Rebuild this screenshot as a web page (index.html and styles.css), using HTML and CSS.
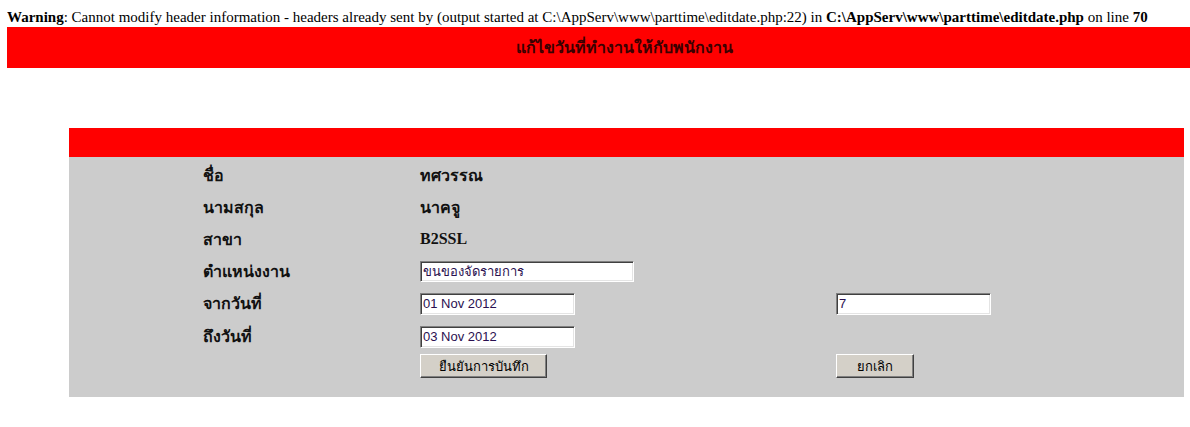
FILE: index.html
```html
<!DOCTYPE html>
<html lang="th">
<head>
<meta charset="utf-8">
<title>แก้ไขวันที่ทำงานให้กับพนักงาน</title>
<link rel="stylesheet" href="styles.css">
</head>
<body>
<div class="warning"><b>Warning</b>: Cannot modify header information - headers already sent by (output started at C:\AppServ\www\parttime\editdate.php:22) in <b>C:\AppServ\www\parttime\editdate.php</b> on line <b>70</b></div>
<div class="title-bar">แก้ไขวันที่ทำงานให้กับพนักงาน</div>
<div class="panel">
  <div class="panel-head"></div>
  <div class="panel-body">
    <div class="lbl">ชื่อ</div><div class="val">ทศวรรณ</div><div></div>
    <div class="lbl">นามสกุล</div><div class="val">นาคจู</div><div></div>
    <div class="lbl">สาขา</div><div class="val">B2SSL</div><div></div>
    <div class="lbl">ตำแหน่งงาน</div><div class="val"><input class="field field-wide" type="text" value="ขนของจัดรายการ"></div><div></div>
    <div class="lbl">จากวันที่</div><div class="val"><input class="field" type="text" value="01 Nov 2012"></div><div class="val"><input class="field" type="text" value="7"></div>
    <div class="lbl">ถึงวันที่</div><div class="val"><input class="field" type="text" value="03 Nov 2012"></div><div></div>
    <div></div><div class="val"><button class="btn btn-save" type="button">ยืนยันการบันทึก</button></div><div class="val"><button class="btn btn-cancel" type="button">ยกเลิก</button></div>
  </div>
</div>
</body>
</html>
```

FILE: styles.css
```css
html, body {
  background: #ffffff;
}
body {
  margin: 8px 0 0 7px;
  font-family: "Liberation Serif", "Times New Roman", serif;
  font-size: 16px;
  color: #000;
  overflow: hidden;
}
.warning {
  font-size: 15px;
  line-height: 19px;
  white-space: nowrap;
}
.title-bar {
  background: #ff0000;
  height: 41px;
  line-height: 41px;
  padding-left: 52px;
  text-align: center;
  font-weight: bold;
  font-size: 16px;
  color: #3a0000;
}
.panel {
  margin: 60px 0 0 62px;
  width: 1115px;
}
.panel-head {
  background: #ff0000;
  height: 29px;
}
.panel-body {
  background: #cccccc;
  display: grid;
  grid-template-columns: 217px 416px 1fr;
  grid-template-rows: 32px 32px 32px 32px 33px 33px 26px;
  padding: 2px 0 18px 134px;
  font-weight: bold;
  color: #111;
}
.lbl, .val {
  display: flex;
  align-items: center;
}
.field {
  box-sizing: border-box;
  width: 155px;
  height: 22px;
  margin: 0;
  padding: 0 2px;
  border: 1px solid;
  border-color: #808080 #ffffff #ffffff #808080;
  box-shadow: inset 1px 1px 0 #404040, inset -1px -1px 0 #e4e4e4;
  background: #fff;
  font-family: "Liberation Sans", Arial, sans-serif;
  font-size: 13px;
  color: #2a1050;
  outline: none;
}
.field-wide {
  width: 214px;
  height: 21px;
}
.btn {
  box-sizing: border-box;
  height: 24px;
  margin: 0;
  padding: 0;
  background: #d4d0c8;
  border: 1px solid;
  border-color: #ffffff #404040 #404040 #ffffff;
  box-shadow: inset -1px -1px 0 #808080;
  font-family: "Liberation Sans", Arial, sans-serif;
  font-size: 13px;
  color: #000;
}
.btn-save {
  width: 127px;
}
.btn-cancel {
  width: 78px;
}
```
